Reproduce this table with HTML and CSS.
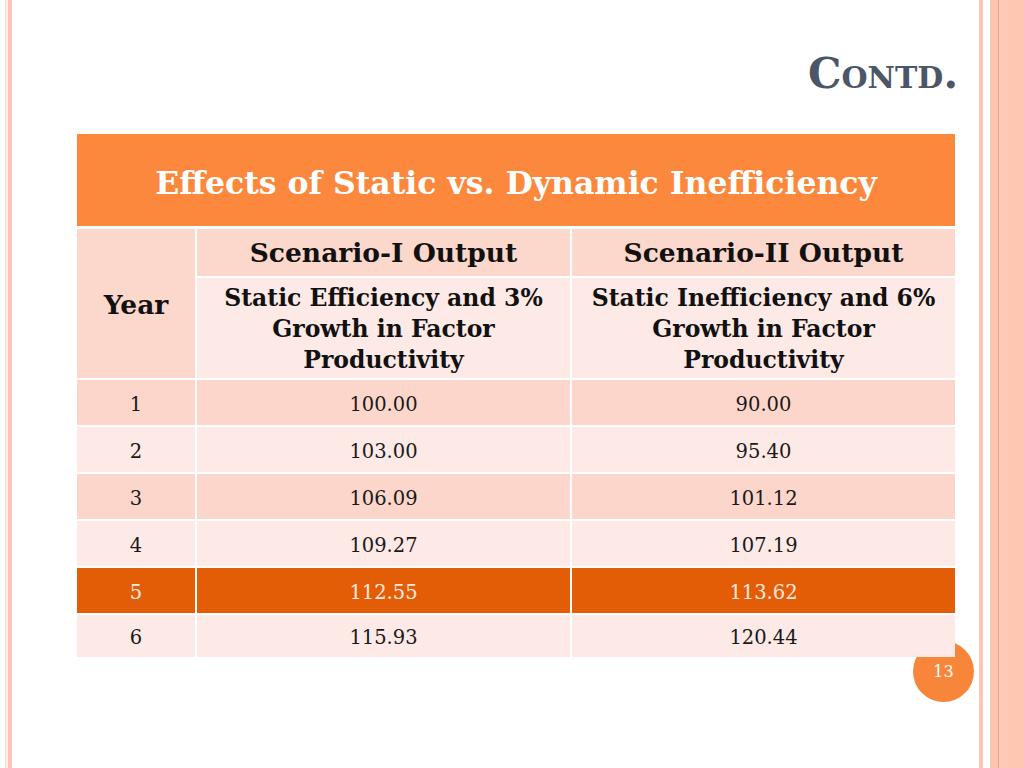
FILE: index.html
```html
<!DOCTYPE html>
<html>
<head>
<meta charset="utf-8">
<link rel="stylesheet" href="styles.css">
</head>
<body>
<div class="slide">
  <div class="stripes-left"><span class="s1"></span><span class="s2"></span><span class="s3"></span></div>
  <main class="content">
    <h1 class="title">C<span class="sc">ONTD</span>.</h1>
    <table class="grid">
      <colgroup><col class="c1"><col class="c2"><col class="c3"></colgroup>
      <tr class="head"><th colspan="3">Effects of Static vs. Dynamic Inefficiency</th></tr>
      <tr class="sub1"><th rowspan="2" class="year">Year</th><th>Scenario-I Output</th><th>Scenario-II Output</th></tr>
      <tr class="sub2"><th>Static Efficiency and 3% Growth in Factor Productivity</th><th>Static Inefficiency and 6% Growth in Factor Productivity</th></tr>
      <tr class="odd"><td>1</td><td>100.00</td><td>90.00</td></tr>
      <tr class="even"><td>2</td><td>103.00</td><td>95.40</td></tr>
      <tr class="odd"><td>3</td><td>106.09</td><td>101.12</td></tr>
      <tr class="even"><td>4</td><td>109.27</td><td>107.19</td></tr>
      <tr class="hi"><td>5</td><td>112.55</td><td>113.62</td></tr>
      <tr class="even last"><td>6</td><td>115.93</td><td>120.44</td></tr>
    </table>
  </main>
  <div class="stripes-right"><span class="r1"></span><span class="r2"></span><span class="r3"></span><span class="r4"></span><span class="r5"></span><span class="r6"></span></div>
  <div class="pagenum">13</div>
</div>
</body>
</html>
```
FILE: styles.css
```css
html, body {
  margin: 0;
  padding: 0;
  background: #ffffff;
}
.slide {
  position: relative;
  width: 1024px;
  height: 768px;
  display: flex;
  overflow: hidden;
  font-family: "DejaVu Serif", "Liberation Serif", serif;
}
.stripes-left {
  display: flex;
  padding-left: 5px;
  height: 100%;
}
.stripes-left span { display: block; height: 100%; }
.stripes-left .s1 { width: 1px; background: #f6dcc6; }
.stripes-left .s2 { width: 2px; background: #fdf1e8; }
.stripes-left .s3 { width: 4px; background: #fcc4b4; }

.content {
  flex: 1;
  display: flex;
  flex-direction: column;
  padding-left: 65px;
  padding-right: 24px;
}
.title {
  margin: 51px 0 0 0;
  align-self: flex-end;
  font-family: "DejaVu Serif", serif;
  font-weight: bold;
  font-size: 42px;
  line-height: 46px;
  color: #4b5668;
  margin-right: -3px;
}
.title .sc { font-size: 30px; }

.grid {
  position: relative;
  z-index: 1;
  margin-top: 33px;
  border-collapse: separate;
  border-spacing: 0;
  width: 878px;
  table-layout: fixed;
}
.grid col.c1 { width: 120px; }
.grid col.c2 { width: 375px; }
.grid col.c3 { width: 383px; }
.grid th, .grid td {
  padding: 0;
  text-align: center;
  border-right: 2px solid #ffffff;
  border-bottom: 2px solid #ffffff;
}
.grid tr th:last-child, .grid tr td:last-child { border-right: none; }
.grid .head th {
  background: #fb883c;
  color: #ffffff;
  height: 88px;
  padding-top: 4px;
  font-size: 31.5px;
  font-weight: bold;
  border-bottom: 3px solid #ffffff;
}
.grid .sub1 th {
  background: #fcd7cb;
  height: 47px;
  font-size: 26.5px;
  color: #111111;
  font-weight: bold;
}
.grid .sub1 th.year {
  border-right: 2px solid #ffffff;
  padding-top: 2px;
}
.grid .sub2 th {
  background: #fde9e5;
  height: 97px;
  padding: 3px 8px 0 8px;
  font-size: 23.5px;
  line-height: 31px;
  color: #111111;
  font-weight: bold;
}
.grid td {
  height: 42px;
  padding-top: 3px;
  color: #1a1a1a;
  font-family: "DejaVu Serif", serif;
  font-size: 19.5px;
}
.grid .odd td { background: #fcd6ca; }
.grid .even td { background: #fde9e6; }
.grid .hi td { background: #e35d06; color: #fde9e0; }
.grid .last td { height: 39px; border-bottom: none; }

.stripes-right {
  display: flex;
  height: 100%;
  margin-left: auto;
}
.stripes-right span { display: block; height: 100%; }
.stripes-right .r1 { width: 4px; background: #fcc8b6; }
.stripes-right .r2 { width: 7px; background: #ffffff; }
.stripes-right .r3 { width: 8px; background: #fcc5b2; }
.stripes-right .r4 { width: 1px; background: #e8a184; }
.stripes-right .r5 { width: 9px; background: #fdcab8; }
.stripes-right .r6 { width: 16px; background: #fdc7b1; }

.pagenum {
  position: absolute;
  left: 913px;
  top: 641px;
  width: 61px;
  height: 61px;
  border-radius: 50%;
  background: #f8863a;
  color: #ffffff;
  font-family: "DejaVu Serif", serif;
  font-size: 16px;
  display: flex;
  align-items: center;
  justify-content: center;
}
```
